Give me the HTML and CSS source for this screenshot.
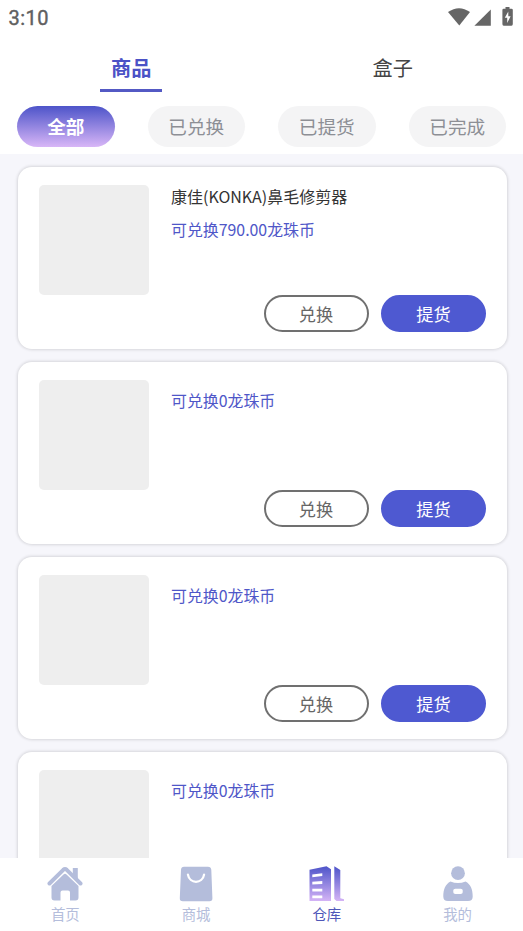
FILE: index.html
```
<!DOCTYPE html>
<html lang="zh-CN">
<head>
<meta charset="utf-8">
<title>仓库</title>
<link rel="stylesheet" href="styles.css">
</head>
<body>
<div class="app">
  <header class="header">
    <div class="status">
      <span class="time">3:10</span>
      <svg class="status-icons" width="68" height="20" viewBox="0 0 68 20" fill="#666">
        <path d="M0 5Q11-2.600 22 5L11.300 18.600z"/>
        <path d="M42.800 2.600V18.800H26.400z"/>
        <path fill-rule="evenodd" d="M57.500 0h4v1.800h2q1.300 0 1.300 1.300v14q0 1.700-1.300 1.700h-7.800q-1.300 0-1.300-1.700V3.100q0-1.300 1.300-1.300h1.800zM60.300 4.500L56.800 10.800h2.400V16L62.600 9.200h-2.300z"/>
      </svg>
    </div>
    <nav class="tabs">
      <div class="tab active"><span>商品</span></div>
      <div class="tab"><span>盒子</span></div>
    </nav>
    <div class="filters">
      <div class="pill selected">全部</div>
      <div class="pill">已兑换</div>
      <div class="pill">已提货</div>
      <div class="pill">已完成</div>
    </div>
  </header>
  <main class="list">
    <article class="card">
      <div class="thumb"></div>
      <div class="info">
        <div class="name">康佳(KONKA)鼻毛修剪器</div>
        <div class="price">可兑换790.00龙珠币</div>
        <div class="actions"><div class="btn">兑换</div><div class="btn primary">提货</div></div>
      </div>
    </article>
    <article class="card">
      <div class="thumb"></div>
      <div class="info untitled">
        <div class="price">可兑换0龙珠币</div>
        <div class="actions"><div class="btn">兑换</div><div class="btn primary">提货</div></div>
      </div>
    </article>
    <article class="card">
      <div class="thumb"></div>
      <div class="info untitled">
        <div class="price">可兑换0龙珠币</div>
        <div class="actions"><div class="btn">兑换</div><div class="btn primary">提货</div></div>
      </div>
    </article>
    <article class="card">
      <div class="thumb"></div>
      <div class="info untitled">
        <div class="price">可兑换0龙珠币</div>
      </div>
    </article>
  </main>
  <nav class="bottom">
    <div class="item">
      <svg width="36" height="36" viewBox="0 0 36 36" fill="#b4bddb">
        <path d="M2.500 17.500L16.300 3.800Q18 2.200 19.700 3.800L33.500 17.500" fill="none" stroke="#b4bddb" stroke-width="4" stroke-linecap="round" stroke-linejoin="round"/>
        <path d="M25.800 2h5v13l-5-5z"/>
        <path d="M16.500 8.500Q18 7.200 19.500 8.500L31.500 20V31.500q0 3-3 3H23V26.500q0-2-2-2h-5.500q-2 0-2 2v8H7.500q-3 0-3-3V20z"/>
      </svg>
      <span>首页</span>
    </div>
    <div class="item">
      <svg width="36" height="36" viewBox="0 0 36 36">
        <path d="M6 .7H30q3 0 3.300 3L34.400 32q.2 3.300-3 3.300H4.800Q1.600 35.300 1.800 32L3 3.700Q3.200.7 6 .7z" fill="#b4bddb"/>
        <path d="M9.900 8.500C11.500 18.300 24.500 18.300 26.100 8.500" fill="none" stroke="#fff" stroke-width="2.200" stroke-linecap="round"/>
      </svg>
      <span>商城</span>
    </div>
    <div class="item current">
      <svg width="36" height="36" viewBox="0 0 36 36">
        <defs><linearGradient id="tower" x1="0" y1="0" x2="0" y2="36" gradientUnits="userSpaceOnUse"><stop offset="0" stop-color="#4d54c9"/><stop offset="1" stop-color="#d8b6f7"/></linearGradient></defs>
        <path fill="url(#tower)" fill-rule="evenodd" d="M.5 3.800L17.500.3 22 3.300V35H.5zM3.300 8.500v2.800L13.300 10V7.200zM3.300 15.800v2.800l10-.7v-2.800zM3.300 22.800v2.700h10v-2.700zM3.300 29.500v2.700h10v-2.700zM25.300.3L31.300 4V32.300l3.700.9V35H27.500L25.300 33z"/>
      </svg>
      <span>仓库</span>
    </div>
    <div class="item">
      <svg width="36" height="36" viewBox="0 0 36 36" fill="#b4bddb">
        <circle cx="18" cy="7.200" r="6.900"/>
        <path fill-rule="evenodd" d="M10.500 15.500Q18 18.700 25.500 15.500C30.500 18 32.800 23.500 32.700 30.500Q32.700 35 28 35H8Q3.300 35 3.300 30.500C3.200 23.500 5.500 18 10.500 15.500zM15.300 22.700q-2 0-2 1.500v2q0 1.700 2 1.700h5.400q2 0 2-1.700v-2q0-1.500-2-1.500z"/>
      </svg>
      <span>我的</span>
    </div>
  </nav>
</div>
</body>
</html>
```
FILE: styles.css
```
* { box-sizing: border-box; }
body {
  margin: 0;
  background: #f6f6fb;
  font-family: "Noto Sans CJK SC", sans-serif;
  color: #333;
}
.app {
  height: 931px;
  display: flex;
  flex-direction: column;
  overflow: hidden;
}
.header {
  flex: none;
  height: 154px;
  background: #fff;
}
.status {
  height: 36px;
  padding: 0 7px 0 8.5px;
  display: flex;
  align-items: center;
  justify-content: space-between;
}
.time {
  font: 400 20px/37px Roboto, sans-serif;
  color: #606060;
  -webkit-text-stroke: .4px #606060;
  letter-spacing: .45px;
}
.status-icons { margin-bottom: 2px; }
.tabs {
  height: 56px;
  display: flex;
}
.tab {
  flex: 1;
  display: flex;
  justify-content: center;
  font-size: 20.2px;
  line-height: 63px;
  color: #444;
}
.tab span {
  width: 62px;
  height: 56px;
  padding-left: 1px;
  text-align: center;
}
.tab.active {
  color: #4b52c6;
  font-weight: 700;
}
.tab.active span { border-bottom: 3px solid #5359c4; }
.filters {
  padding: 14px 17px 0;
  display: flex;
  justify-content: space-between;
}
.pill {
  width: 97.5px;
  height: 41px;
  border-radius: 21px;
  background: #f4f4f5;
  color: #8d8f95;
  font-size: 18.6px;
  line-height: 40px;
  text-align: center;
}
.pill.selected {
  background: linear-gradient(#4d54c9, #d8b6f7);
  color: #fff;
  font-weight: 700;
}
.list {
  flex: 1;
  min-height: 0;
  overflow: hidden;
  padding: 13px 16px 0 18px;
  display: flex;
  flex-direction: column;
  gap: 13px;
}
.card {
  flex: none;
  height: 182px;
  padding: 18px 21px 17px;
  display: flex;
  gap: 22px;
  border-radius: 14px;
  background: #fff;
  box-shadow: 0 0 3px 1px rgba(0, 0, 0, .13);
}
.thumb {
  flex: none;
  width: 110px;
  height: 110px;
  border-radius: 5px;
  background: #eee;
}
.info {
  flex: 1;
  display: flex;
  flex-direction: column;
}
.info.untitled { padding-top: 9px; }
.name {
  margin-top: -1px;
  font-size: 16px;
  line-height: 24px;
}
.price {
  font-size: 15.9px;
  line-height: 24px;
  color: #4f57c8;
}
.name + .price { margin-top: 10px; }
.actions {
  margin-top: auto;
  display: flex;
  justify-content: flex-end;
  gap: 12.5px;
}
.btn {
  width: 105px;
  height: 37px;
  border: 2px solid #707070;
  border-radius: 19px;
  font-size: 17.2px;
  line-height: 34px;
  text-align: center;
  color: #666;
}
.btn.primary {
  border-color: #4e59d1;
  background: #4e59d1;
  color: #fff;
}
.bottom {
  flex: none;
  height: 73px;
  padding-top: 8px;
  display: flex;
  background: #fff;
}
.item {
  flex: 1;
  display: flex;
  flex-direction: column;
  align-items: center;
  font-size: 14.4px;
  line-height: 22px;
  color: #b4bddb;
}
.item span { margin-top: 1px; }
.item.current { color: #4f57b8; }
```
